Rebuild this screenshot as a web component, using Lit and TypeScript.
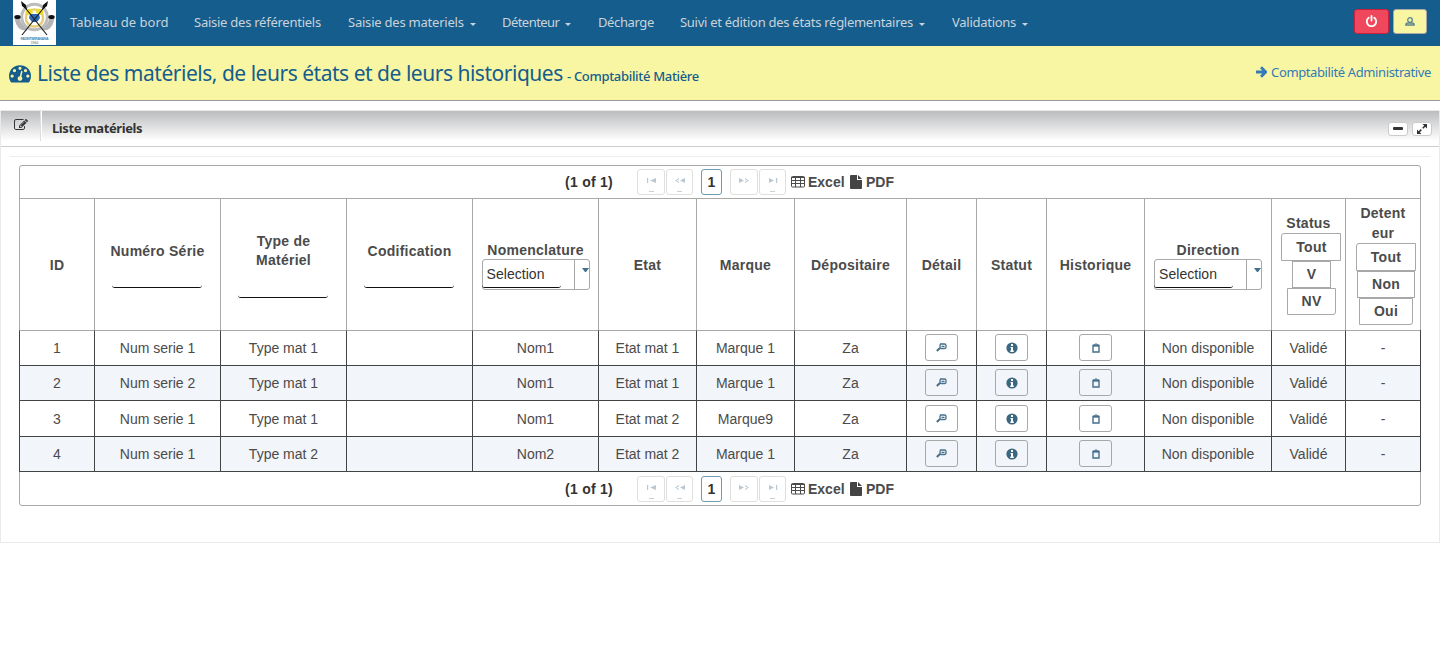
import { LitElement, html, css, svg, nothing } from "lit";
import { customElement } from "lit/decorators.js";

const tachometer = svg`<path d="M384 1152q0-53-37.5-90.5t-90.5-37.5-90.5 37.5-37.5 90.5 37.5 90.5 90.5 37.5 90.5-37.5 37.5-90.5zm192-448q0-53-37.5-90.5t-90.5-37.5-90.5 37.5-37.5 90.5 37.5 90.5 90.5 37.5 90.5-37.5 37.5-90.5zm428 481l101-382q6-26-7.5-48.5t-38.5-29.5-48 6.5-30 39.5l-101 382q-60 5-107 43.5t-63 98.5q-20 77 20 146t117 89 146-20 89-117q16-60-6-117t-72-91zm660-33q0-53-37.5-90.5t-90.5-37.5-90.5 37.5-37.5 90.5 37.5 90.5 90.5 37.5 90.5-37.5 37.5-90.5zm-640-640q0-53-37.5-90.5t-90.5-37.5-90.5 37.5-37.5 90.5 37.5 90.5 90.5 37.5 90.5-37.5 37.5-90.5zm448 192q0-53-37.5-90.5t-90.5-37.5-90.5 37.5-37.5 90.5 37.5 90.5 90.5 37.5 90.5-37.5 37.5-90.5zm320 448q0 261-141 483-19 29-54 29h-1402q-35 0-54-29-141-221-141-483 0-182 71-348t191-286 286-191 348-71 348 71 286 191 191 286 71 348z"/>`;
const edit = svg`<path d="M888 1184l116-116-152-152-116 116v56h96v96h56zm440-720q-16-16-33 1l-350 350q-17 17-1 33t33-1l350-350q17-17 1-33zm80 594v190q0 119-84.5 203.5t-203.5 84.5h-832q-119 0-203.5-84.5t-84.5-203.5v-832q0-119 84.5-203.5t203.5-84.5h832q63 0 117 25 15 7 18 23 3 17-9 29l-49 49q-14 14-32 8-23-6-45-6h-832q-66 0-113 47t-47 113v832q0 66 47 113t113 47h832q66 0 113-47t47-113v-126q0-13 9-22l64-64q15-15 35-7t20 29zm-96-738l288 288-672 672h-288v-288zm444 132l-92 92-288-288 92-92q28-28 68-28t68 28l152 152q28 28 28 68t-28 68z"/>`;
const power = svg`<path d="M1664 896q0 156-61 298t-164 245-245 164-298 61-298-61-245-164-164-245-61-298q0-182 80.5-343t226.500-270q43-32 95.500-25t83.500 50q32 42 24.500 94.500t-49.500 84.500q-98 74-151.500 181t-53.500 228q0 104 40.500 198.500t109.500 163.500 163.500 109.500 198.500 40.500 198.500-40.500 163.500-109.500 109.500-163.500 40.500-198.500q0-121-53.500-228t-151.500-181q-42-32-49.500-84.500t24.500-94.500q31-43 84-50t95 25q146 109 226.500 270t80.500 343zm-640-768v640q0 52-38 90t-90 38-90-38-38-90v-640q0-52 38-90t90-38 90 38 38 90z"/>`;

const rows = [
  ["1", "Num serie 1", "Type mat 1", "", "Nom1", "Etat mat 1", "Marque 1", "Za"],
  ["2", "Num serie 2", "Type mat 1", "", "Nom1", "Etat mat 1", "Marque 1", "Za"],
  ["3", "Num serie 1", "Type mat 1", "", "Nom1", "Etat mat 2", "Marque9", "Za"],
  ["4", "Num serie 1", "Type mat 2", "", "Nom2", "Etat mat 2", "Marque 1", "Za"],
];

@customElement("app-root")
export class AppRoot extends LitElement {
  static styles = css`
    :host { display: block; height: 652px; background: #fff; overflow: hidden;
      font: 14px/20px "Liberation Sans", Arial, sans-serif; color: #4b4b4b; }
    * { box-sizing: border-box; }
    svg { display: block; flex: none; }
    .nav { height: 46px; background: #155d8c; display: flex; padding-left: 13px;
      font: 13px/18px "Noto Sans", sans-serif; color: #c9d3db; }
    .logo { width: 43px; height: 45px; margin-right: 1px; }
    .menu { display: grid; grid-template-columns: 124px 154px 154px 96px 82px 272px 110px; }
    .item { display: flex; align-items: center; padding-left: 13px; padding-bottom: 2px; white-space: nowrap; }
    .caret { border: 3px solid transparent; border-top-color: currentColor; border-bottom: 0; margin: 5px 0 0 6px; }
    .acts { margin-left: auto; display: flex; gap: 4px; padding: 9px 13px 0 0; }
    .act { width: 35px; height: 25px; border: 1px solid #c9203f; border-radius: 3px; background: #ef475b; display: grid; place-items: center; fill: #fff; }
    .act.user { width: 34px; background: #f8f6a3; border-color: #a8a8a8; }
    .band { height: 55px; background: #f8f6a3; border-bottom: 1px solid #999; display: flex; align-items: flex-start;
      font-family: "Noto Sans", sans-serif; color: #155d8c; padding: 0 9px; white-space: nowrap; }
    .gauge { fill: #155d8c; margin: 16px 6px 0 0; }
    .title { font-size: 21px; line-height: 30px; margin-top: 12px; width: 530px; letter-spacing: -.48px; }
    .sub { font-size: 13px; line-height: 20px; margin-top: 20px; font-weight: 500; letter-spacing: -.32px; }
    .adm { margin: 16px 0 0 auto; font-size: 13px; line-height: 20px; color: #337ab7; display: flex; align-items: center; gap: 4px; }
    .admt { letter-spacing: -.38px; }
    .panel { margin-top: 9px; height: 433px; border: 1px solid #eaeaea; }
    .phead { height: 36px; background: linear-gradient(#bbbcbe, #fff 85%); border-bottom: 1px solid #ccc; display: flex; }
    .pedit { width: 40px; height: 30px; border-right: 1px solid #ddd; padding: 7px 0 0 13px; fill: #333; box-shadow: 1px 0 #fff; }
    .ptitle { font: bold 13px/20px "Noto Sans", sans-serif; color: #333; margin: 7px 0 0 11px; letter-spacing: -.4px; }
    .tools { margin-left: auto; display: flex; gap: 4px; padding: 11px 7px 0 0; }
    .tool { width: 20px; height: 14px; border: 1px solid #ccc; border-radius: 3px; background: #fff; display: grid; place-items: center; }
    .rule { height: 1px; background: #eee; margin: 9px 9px 8px; }
    .table { margin: 0 18px; width: 1402px; border: 1px solid #a8a8a8; border-radius: 3px; }
    .pager { height: 32px; display: flex; align-items: center; padding-left: 545px; font-weight: bold; white-space: nowrap; }
    .pager.foot { height: 33px; }
    .count { width: 72px; color: #333; letter-spacing: .27px; }
    .pg { width: 28px; height: 26px; border: 1px solid #dfdfdf; border-radius: 3px; margin-right: 1px; }
    .pg.cur { width: 21px; border-color: #6f9ab3; color: #333; margin: 0 8px 0 7px; text-align: center; line-height: 24px; }
    .back { width: 27px; margin-right: 1px; }
    .grid-ico { margin: 0 3px 0 4px; }
    .file-ico { margin-right: 4px; }
    .excel { width: 42px; }
    .grid { display: grid; grid-template-columns: 75px 126px 126px 126px 126px 98px 98px 112px 70px 70px 98px 127px 74px 75px; margin: 0 -1px; width: 1402px; border-right: 1px solid #a8a8a8; }
    .c { border-left: 1px solid #a8a8a8; border-top: 1px solid #a8a8a8; display: flex; flex-direction: column; align-items: center; justify-content: center; text-align: center; }
    .head { height: 132px; font-weight: bold; }
    .head .c { letter-spacing: .25px; }
    .head .c.top { justify-content: flex-start; padding-top: 42px; }
    .head .c.sel { padding-top: 41px; }
    .head .c.type { padding-top: 33px; line-height: 19px; }
    .input { width: 90px; height: 27px; border-bottom: 1px solid #111; border-radius: 3px; margin-right: 1px; }
    .type .input { height: 28px; }
    .select { width: 108px; height: 31px; border: 1px solid #a8a8a8; border-radius: 3px; display: flex; font-weight: normal; color: #333; letter-spacing: 0.05px; margin-top: -1px; }
    .val { width: 79px; height: 28px; margin-left: -1px; border-bottom: 1px solid #111; border-radius: 3px; padding-left: 5px; line-height: 29px; text-align: left; }
    .drop { margin-left: auto; width: 15px; border-left: 1px solid #a8a8a8; padding: 8px 0 0 7px; }
    .arrow { width: 7px; border: 3.5px solid transparent; border-top: 4px solid #3f6f8d; border-bottom: 0; }
    .head .c.st { padding-top: 14px; }
    .head .c.dt { padding-top: 4px; }
    .b { height: 27px; border: 1px solid #a8a8a8; line-height: 25px; margin-left: 5px; width: 60px; padding-left: 1px; }
    .b.first { height: 28px; border-top-left-radius: 3px; line-height: 26px; }
    .b.last { border-bottom-right-radius: 3px; }
    .b.w39 { width: 39px; } .b.w49 { width: 49px; } .b.w58 { width: 58px; } .b.w54 { width: 54px; }
    .row { height: 35px; border-right-color: #444; }
    .row.tall { height: 36px; }
    .row .c { border-color: #444; padding-bottom: 1px; }
    .row.tall .c { padding-bottom: 0; }
    .row.one .c { border-top-color: #a8a8a8; }
    .row.alt { background: #f2f5fa; }
    .row.end { border-bottom: 1px solid #444; height: 36px; }
    .btn { width: 33px; height: 27px; border: 1px solid #a8a8a8; border-radius: 3px; display: grid; place-items: center; }
  `;

  item(label: string, ls: string, caret = false) {
    return html`<div class="item"><span style="letter-spacing:${ls}px">${label}</span>${caret ? html`<i class="caret"></i>` : nothing}</div>`;
  }

  logo() {
    return html`<svg class="logo" viewBox="0 0 43 45">
      <rect width="43" height="45" fill="#fff"/>
      <path d="M4 18Q6 29 14 28M39 18Q37 29 29 28" fill="none" stroke="#b4b4b4" stroke-width="5"/>
      <circle cx="21.500" cy="17" r="12.800" fill="#fff" stroke="#bcbcbc" stroke-width="3"/>
      <circle cx="21.500" cy="18" r="8.600" fill="none" stroke="#e3cc70" stroke-width="2.400"/>
      <path d="M12 13q2-5 7-4l1 4-5 2zM31 13q-2-5-7-4l-1 4 5 2z" fill="#f0dc24"/>
      <path d="M17 14h9l1 4-3 4h-5l-3-4z" fill="#2d69b4"/>
      <path d="M10 5L34 35M33 5L9 35" stroke="#222" stroke-width="1.200"/>
      <path d="M8 1l5 4 1 5-5-4zM35 1l-5 4-1 5 5-4z" fill="#111"/>
      <ellipse cx="4.500" cy="17" rx="3.200" ry="2" fill="#111"/><ellipse cx="38.500" cy="17" rx="3.200" ry="2" fill="#111"/>
      <text x="21.500" y="39.800" text-anchor="middle" font-size="3.600" font-weight="bold" textLength="28" fill="#3c8fc0" font-family="Liberation Sans">FADINTSERANANA</text>
      <text x="21.500" y="44" text-anchor="middle" font-size="3.400" fill="#555" font-family="Liberation Sans">1960</text>
    </svg>`;
  }

  nav(d: string, line = "M11 21.500h5", extra = "") {
    return html`<div class="pg ${extra}"><svg width="25" height="24"><path d="${d}" fill="#b9c8d2"/><path d="${line}" stroke="#c6d2da"/></svg></div>`;
  }

  pager(foot = false) {
    return html`<div class="pager ${foot ? "foot" : ""}">
      <span class="count">(1 of 1)</span>
      ${this.nav("M9 8h1.200v5h-1.200zM18 8v5l-6-2.500z")}${this.nav("M12 8v1.300l-2.500 1.200 2.500 1.200v1.300l-4-2.500zM18 8v5l-5-2.500z", "M10 21.500h5", "back")}
      <span class="pg cur">1</span>
      ${this.nav("M8 8v5l5-2.500zM14 8v1.300l2.500 1.200-2.500 1.200v1.300l4-2.500z", "M0 0")}${this.nav("M9 8v5l5-2.500zM16 8h1.200v5h-1.200z", "M10 21.500h5", "back")}
      <svg class="grid-ico" width="14" height="12"><path d="M1.500.5h11q1 0 1 1v8.500q0 1-1 1h-11q-1 0-1-1v-8.500q0-1 1-1zM0 1.500h14M0 4.500h14M0 7.500h14M4.500 1v10M9.500 1v10" fill="none" stroke="#4b4b4b"/></svg>
      <span class="excel">Excel</span>
      <svg class="file-ico" width="12" height="14" fill="#444"><path d="M0 1q0-1 1-1h6v5h5v8q0 1-1 1H1q-1 0-1-1zM8 0l4 4H8z"/></svg>
      <span>PDF</span>
    </div>`;
  }

  select() {
    return html`<div class="select"><span class="val">Selection</span><span class="drop"><div class="arrow"></div></span></div>`;
  }

  render() {
    return html`
      <div class="nav">
        ${this.logo()}
        <div class="menu">
          ${this.item("Tableau de bord", "0")}${this.item("Saisie des référentiels", "-.25")}
          ${this.item("Saisie des materiels", "-.22", true)}${this.item("Détenteur", "-.55", true)}
          ${this.item("Décharge", "-.38")}${this.item("Suivi et édition des états réglementaires", "-.28", true)}
          ${this.item("Validations", "-.27", true)}
        </div>
        <div class="acts">
          <div class="act"><svg width="13" height="13" viewBox="0 0 1792 1792">${power}</svg></div>
          <div class="act user"><svg width="10" height="9" fill="none" stroke="#5b8390" stroke-width="1.300"><circle cx="5" cy="3" r="2.300"/><path d="M.8 8q0-2 2.200-2h4q2.200 0 2.200 2z"/></svg></div>
        </div>
      </div>
      <div class="band">
        <svg class="gauge" width="22" height="22" viewBox="0 0 1792 1792">${tachometer}</svg>
        <span class="title">Liste des matériels, de leurs états et de leurs historiques</span>
        <span class="sub">- Comptabilité Matière</span>
        <span class="adm"><svg width="11" height="12"><path d="M0 6h9M5 1.200L9.800 6 5 10.800" fill="none" stroke="#337ab7" stroke-width="2.800"/></svg><span class="admt">Comptabilité Administrative</span></span>
      </div>
      <div class="panel">
        <div class="phead">
          <div class="pedit"><svg width="14" height="14" viewBox="0 0 1792 1792">${edit}</svg></div>
          <span class="ptitle">Liste matériels</span>
          <div class="tools">
            <div class="tool"><svg width="10" height="4"><rect y="0" width="10" height="3" rx="1" fill="#333"/></svg></div>
            <div class="tool"><svg width="10" height="10" fill="#333"><path d="M5.500 0H10v4.500zM0 5.500V10h4.500z"/><path d="M1.500 8.500L8.500 1.500" stroke="#333" stroke-width="1.600" stroke-dasharray="4 2"/></svg></div>
          </div>
        </div>
        <div class="rule"></div>
        <div class="table">
          ${this.pager()}
          <div class="grid head">
            <div class="c">ID</div>
            <div class="c top">Numéro Série<div class="input"></div></div>
            <div class="c top type"><span>Type de<br>Matériel</span><div class="input"></div></div>
            <div class="c top">Codification<div class="input"></div></div>
            <div class="c top sel">Nomenclature${this.select()}</div>
            <div class="c">Etat</div><div class="c">Marque</div><div class="c">Dépositaire</div>
            <div class="c">Détail</div><div class="c">Statut</div><div class="c">Historique</div>
            <div class="c top sel">Direction${this.select()}</div>
            <div class="c top st">Status<div class="b first">Tout</div><div class="b w39">V</div><div class="b w49 last">NV</div></div>
            <div class="c top dt"><span>Detent<br>eur</span><div class="b first">Tout</div><div class="b w58">Non</div><div class="b w54 last">Oui</div></div>
          </div>
          ${rows.map((r, i) => html`<div class="grid row ${i === 0 ? "one" : ""} ${i % 2 ? "alt" : ""} ${i === 2 ? "tall" : ""} ${i === 3 ? "end" : ""}">
            ${r.map((t) => html`<div class="c">${t}</div>`)}
            <div class="c"><div class="btn"><svg width="11" height="9" fill="none" stroke="#476f8a"><path d="M4 5L.8 8" stroke-width="2"/><path d="M4.500 1h4q1.500 0 1.500 1.500v1.500q0 1.500-1.500 1.500h-3q-1.500 0-1.500-1.500v-1.500zM5.500 3.300h3" stroke-width="1.300"/></svg></div></div>
            <div class="c"><div class="btn"><svg width="12" height="12"><circle cx="6" cy="6" r="5.600" fill="#3b6781"/><path d="M5 2h2v2H5zM4.500 5H7v3.500h.8V10H4.300V8.500H5V6h-.5z" fill="#fff"/></svg></div></div>
            <div class="c"><div class="btn"><svg width="8" height="10" fill="none" stroke="#476f8a"><path d="M1 2.500h6v6.500H1z" stroke-width="1.400"/><path d="M1 2.500h6" stroke-width="2"/><path d="M2.500 1.500q1.500-1.500 3 0"/></svg></div></div>
            <div class="c">Non disponible</div><div class="c">Validé</div><div class="c">-</div>
          </div>`)}
          ${this.pager(true)}
        </div>
      </div>`;
  }
}
